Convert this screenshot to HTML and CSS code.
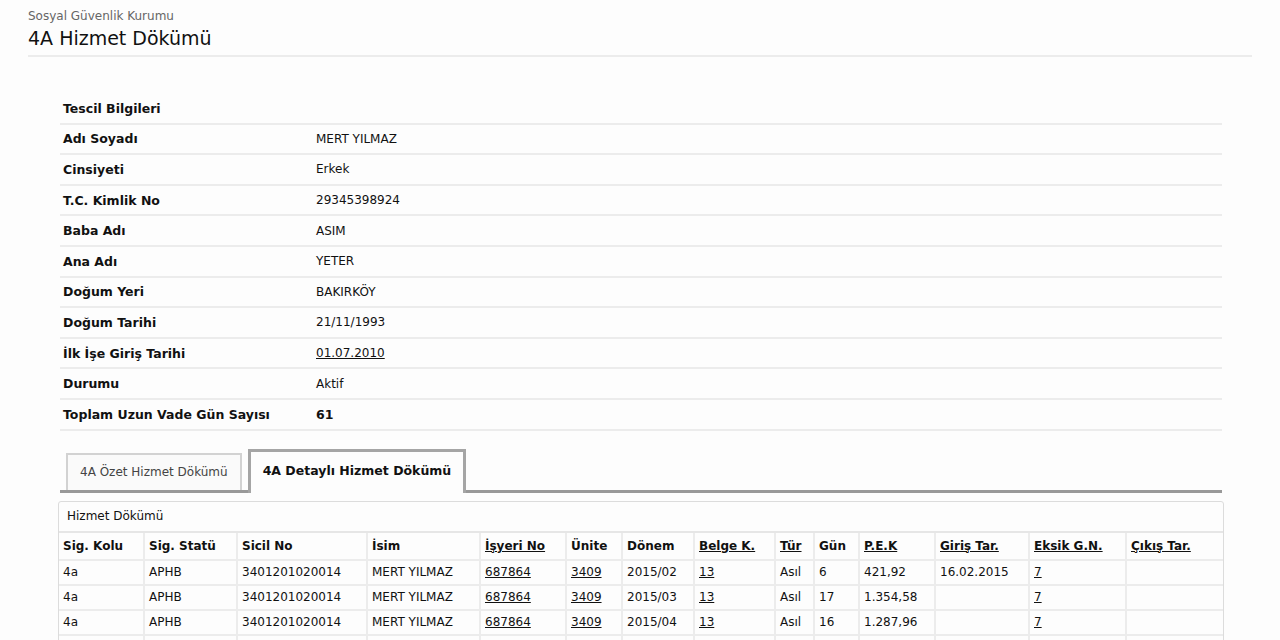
FILE: index.html
```html
<!DOCTYPE html>
<html lang="tr">
<head>
    <meta charset="UTF-8">
    <title>4A Hizmet Dökümü</title>
    <link rel="stylesheet" href="styles.css">
</head>
<body>
    <div class="page-head">
        <div class="org">Sosyal Güvenlik Kurumu</div>
        <h1>4A Hizmet Dökümü</h1>
    </div>

    <table class="info-table">
        <tr><th colspan="2">Tescil Bilgileri</th></tr>
        <tr><th>Adı Soyadı</th><td>MERT YILMAZ</td></tr>
        <tr><th>Cinsiyeti</th><td>Erkek</td></tr>
        <tr><th>T.C. Kimlik No</th><td>29345398924</td></tr>
        <tr><th>Baba Adı</th><td>ASIM</td></tr>
        <tr><th>Ana Adı</th><td>YETER</td></tr>
        <tr><th>Doğum Yeri</th><td>BAKIRKÖY</td></tr>
        <tr><th>Doğum Tarihi</th><td>21/11/1993</td></tr>
        <tr><th>İlk İşe Giriş Tarihi</th><td><a href="#">01.07.2010</a></td></tr>
        <tr><th>Durumu</th><td>Aktif</td></tr>
        <tr><th>Toplam Uzun Vade Gün Sayısı</th><td class="strong">61</td></tr>
    </table>

    <div class="tabs">
        <a href="#" class="tab">4A Özet Hizmet Dökümü</a>
        <a href="#" class="tab active">4A Detaylı Hizmet Dökümü</a>
    </div>

    <div class="panel">
        <div class="panel-title">Hizmet Dökümü</div>
        <table class="service-table">
            <colgroup>
                <col style="width:85px"><col style="width:93px"><col style="width:130px"><col style="width:113px">
                <col style="width:86px"><col style="width:56px"><col style="width:72px"><col style="width:81px">
                <col style="width:39px"><col style="width:45px"><col style="width:76px"><col style="width:94px">
                <col style="width:97px"><col style="width:97px">
            </colgroup>
            <tr class="head">
                <th>Sig. Kolu</th><th>Sig. Statü</th><th>Sicil No</th><th>İsim</th>
                <th><a href="#">İşyeri No</a></th><th>Ünite</th><th>Dönem</th><th><a href="#">Belge K.</a></th>
                <th><a href="#">Tür</a></th><th>Gün</th><th><a href="#">P.E.K</a></th><th><a href="#">Giriş Tar.</a></th>
                <th><a href="#">Eksik G.N.</a></th><th><a href="#">Çıkış Tar.</a></th>
            </tr>
            <tr>
                <td>4a</td><td>APHB</td><td>3401201020014</td><td>MERT YILMAZ</td>
                <td><a href="#">687864</a></td><td><a href="#">3409</a></td><td>2015/02</td><td><a href="#">13</a></td>
                <td>Asıl</td><td>6</td><td>421,92</td><td>16.02.2015</td><td><a href="#">7</a></td><td></td>
            </tr>
            <tr>
                <td>4a</td><td>APHB</td><td>3401201020014</td><td>MERT YILMAZ</td>
                <td><a href="#">687864</a></td><td><a href="#">3409</a></td><td>2015/03</td><td><a href="#">13</a></td>
                <td>Asıl</td><td>17</td><td>1.354,58</td><td></td><td><a href="#">7</a></td><td></td>
            </tr>
            <tr>
                <td>4a</td><td>APHB</td><td>3401201020014</td><td>MERT YILMAZ</td>
                <td><a href="#">687864</a></td><td><a href="#">3409</a></td><td>2015/04</td><td><a href="#">13</a></td>
                <td>Asıl</td><td>16</td><td>1.287,96</td><td></td><td><a href="#">7</a></td><td></td>
            </tr>
            <tr class="next">
                <td></td><td></td><td></td><td></td><td></td><td></td><td></td>
                <td></td><td></td><td></td><td></td><td></td><td></td><td></td>
            </tr>
        </table>
    </div>
</body>
</html>
```

FILE: styles.css
```css
body {
    margin: 0;
    padding: 0 28px 0 28px;
    background-color: #fdfdfd;
    color: #111;
    font-family: 'DejaVu Sans', Verdana, sans-serif;
    font-size: 12px;
    overflow: hidden;
}

a {
    color: #111;
    text-decoration: underline;
}

.page-head {
    padding-top: 9px;
    padding-bottom: 3px;
    border-bottom: 2px solid #ececec;
}

.org {
    font-size: 12px;
    color: #666;
    line-height: 15px;
}

h1 {
    margin: 0;
    font-size: 19px;
    font-weight: normal;
    line-height: 28px;
    color: #111;
}

.info-table {
    border-collapse: collapse;
    margin: 37px 0 0 32px;
    width: 1162px;
}

.info-table th,
.info-table td {
    height: 28.6px;
    padding: 0 3px;
    text-align: left;
    border-bottom: 2px solid #ececec;
    vertical-align: middle;
}

.info-table th {
    width: 247px;
    font-size: 12.5px;
    font-weight: bold;
}

.info-table .strong {
    font-weight: bold;
    font-size: 12.5px;
}

.tabs {
    display: flex;
    align-items: flex-end;
    margin: 20px 0 0 32px;
    width: 1162px;
    padding-left: 6px;
    box-sizing: border-box;
    border-bottom: 3px solid #999;
    height: 42px;
}

.tab {
    display: flex;
    align-items: center;
    height: 35px;
    padding: 0 12px;
    margin-right: 6px;
    text-decoration: none;
    color: #444;
    border: 2px solid #d2d2d2;
    border-bottom: none;
    background-color: #fafafa;
}

.tab.active {
    box-sizing: border-box;
    height: 44px;
    padding: 0 12px 4px;
    margin-bottom: -3px;
    border: 3px solid #a5a5a5;
    border-bottom: none;
    color: #111;
    font-size: 12.5px;
    font-weight: bold;
    background-color: #fdfdfd;
}

.panel {
    margin: 8px 0 0 30px;
    width: 1164px;
    border: 1px solid #dcdcdc;
    border-radius: 3px;
}

.panel-title {
    padding: 0 8px;
    height: 29px;
    line-height: 29px;
    border-bottom: 2px solid #e6e6e6;
}

.service-table {
    border-collapse: collapse;
    width: 100%;
    table-layout: fixed;
}

.service-table th,
.service-table td {
    height: 23px;
    padding: 0 4px;
    text-align: left;
    white-space: nowrap;
    border-right: 2px solid #ececec;
    border-bottom: 2px solid #ececec;
}

.service-table th {
    font-weight: bold;
    height: 26px;
}

.service-table td:last-child,
.service-table th:last-child {
    border-right: none;
}
```
